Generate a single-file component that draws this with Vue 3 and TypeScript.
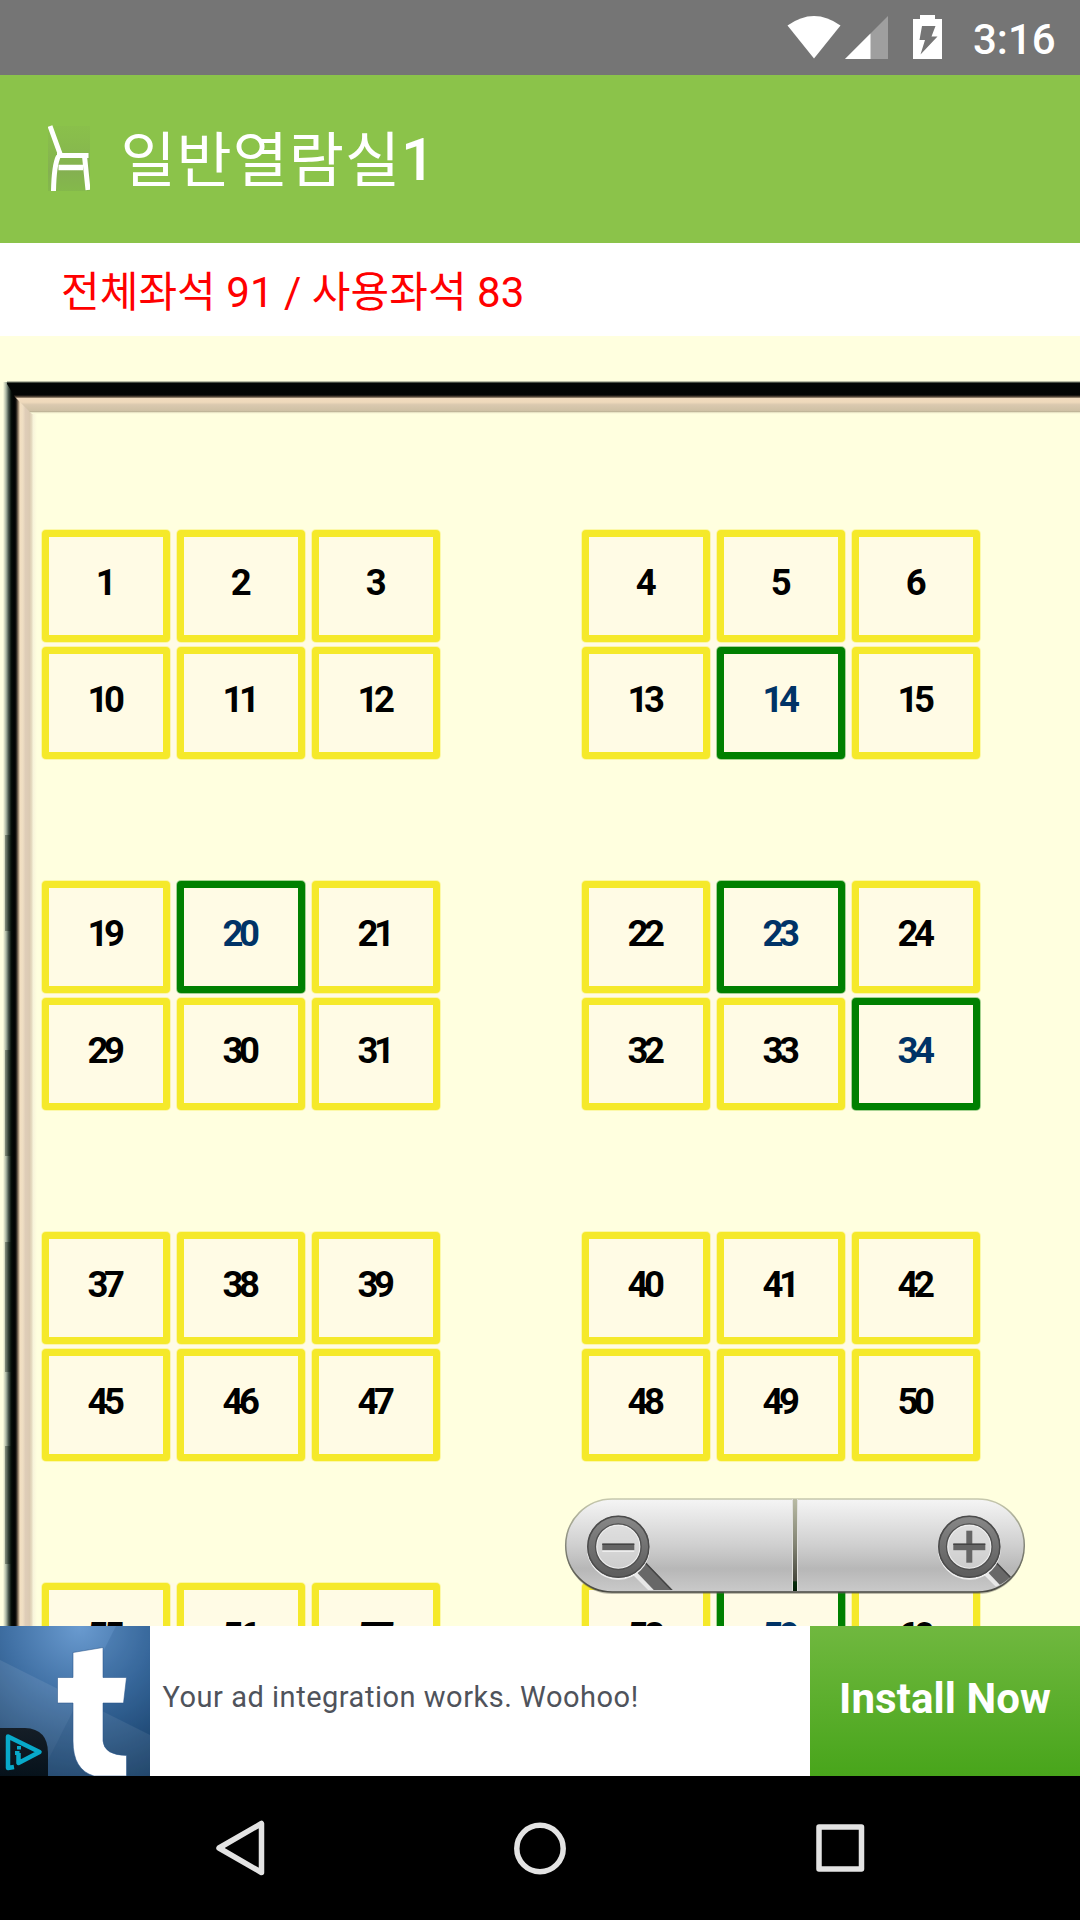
<script setup lang="ts">
interface Seat { id: number; free: boolean }
const free = new Set([14, 20, 23, 34, 59])
const numbers: number[][][] = [
  [[1, 2, 3, 4, 5, 6], [10, 11, 12, 13, 14, 15]],
  [[19, 20, 21, 22, 23, 24], [29, 30, 31, 32, 33, 34]],
  [[37, 38, 39, 40, 41, 42], [45, 46, 47, 48, 49, 50]],
  [[55, 56, 57, 58, 59, 60]],
]
const toSeat = (id: number): Seat => ({ id, free: free.has(id) })
// Each block holds a left and a right group, and each group up to two rows of three.
const blocks = numbers.map((rows) => [0, 3].map((start) => rows.map((r) => r.slice(start, start + 3).map(toSeat))))
const wallShades = [
  { y: 835, h: 96 }, { y: 1050, h: 106 }, { y: 1242, h: 130 }, { y: 1446, h: 118 },
]
</script>

<template>
  <div class="screen">
    <div class="status">
      <svg class="wifi" viewBox="0 0 54 44"><path d="M.5 10.500Q27-8.500 53.500 10.500L27 43.500Z" fill="#fff" /></svg>
      <svg class="signal" viewBox="0 0 43 43"><path d="M0 43L43 0V43Z" fill="#9f9f9f" /><path d="M0 43L25.500 17.500V43Z" fill="#fff" /></svg>
      <svg class="battery" viewBox="0 0 29 44"><path d="M7 0H22V4H29V44H0V4H7Z" fill="#fff" /><path d="M9 11H22.500L18.500 21.500H24.500L7.500 39.500L12 25H6.500Z" fill="#757575" /></svg>
      <span class="time">3:16</span>
    </div>

    <header class="title-bar">
      <svg class="chair" viewBox="0 0 42 66">
        <defs><linearGradient id="chairBg" x2="0" y2="1"><stop offset="0" stop-color="#87b84d" stop-opacity=".3" /><stop offset=".7" stop-color="#84b051" /><stop offset="1" stop-color="#84b94b" /></linearGradient></defs>
        <path d="M0 1H42V66H0Z" fill="url(#chairBg)" />
        <g fill="none" stroke="#fff" stroke-width="5" stroke-linejoin="round">
          <path d="M2 1L12.500 30M9 30.500H40.500M10.500 31Q6 40 5.500 66M36.500 31L40 65" />
          <path d="M10.500 42.500H35" stroke-width="5.500" />
        </g>
      </svg>
      <h1><span class="ko">일반열람실</span><span class="digit">1</span></h1>
    </header>

    <div class="summary">전체좌석 91 / 사용좌석 83</div>

    <main class="map">
      <svg class="wall" viewBox="0 336 1080 1290">
        <defs>
          <linearGradient id="side" gradientUnits="userSpaceOnUse" x1="3" y1="0" x2="37" y2="0">
            <stop offset="0" stop-color="#ffffdf" /><stop offset=".09" stop-color="#a9b5a2" /><stop offset=".16" stop-color="#4d5b50" /><stop offset=".24" stop-color="#07100b" /><stop offset=".3" stop-color="#020504" /><stop offset=".36" stop-color="#030504" /><stop offset=".4" stop-color="#342d25" /><stop offset=".46" stop-color="#a89479" /><stop offset=".5" stop-color="#f2dfc1" /><stop offset=".58" stop-color="#efdec3" /><stop offset=".66" stop-color="#dfcdb8" /><stop offset=".78" stop-color="#dbcab2" /><stop offset=".84" stop-color="#e5dbc0" /><stop offset=".89" stop-color="#f8f4da" /><stop offset="1" stop-color="#ffffdf" />
          </linearGradient>
          <linearGradient id="top" gradientUnits="userSpaceOnUse" x1="0" y1="381" x2="0" y2="414">
            <stop offset="0" stop-color="#ffffdf" /><stop offset=".03" stop-color="#737b6b" /><stop offset=".07" stop-color="#030705" /><stop offset=".42" stop-color="#030504" /><stop offset=".46" stop-color="#342b22" /><stop offset=".5" stop-color="#8c7b66" /><stop offset=".53" stop-color="#f0dabd" /><stop offset=".64" stop-color="#efdabc" /><stop offset=".72" stop-color="#dac9af" /><stop offset=".9" stop-color="#cfc1a5" /><stop offset=".93" stop-color="#bdb396" /><stop offset=".96" stop-color="#f2efd0" /><stop offset="1" stop-color="#ffffdf" />
          </linearGradient>
        </defs>
        <rect x="3" y="382" width="34" height="1244" fill="url(#side)" />
        <path d="M7 381H1080V414H32L15 397L7 384Z" fill="url(#top)" />
        <rect v-for="s in wallShades" :key="s.y" x="5" :y="s.y" width="6" :height="s.h" fill="#06100a" opacity=".35" />
      </svg>

      <div class="seats">
        <section v-for="(groups, b) in blocks" :key="b" class="block">
          <div v-for="(rows, g) in groups" :key="g" class="group">
            <div v-for="(row, r) in rows" :key="r" class="row">
              <div v-for="seat in row" :key="seat.id" class="seat" :class="{ free: seat.free }">{{ seat.id }}</div>
            </div>
          </div>
        </section>
      </div>

      <svg class="zoom" viewBox="0 0 464 100">
        <defs>
          <linearGradient id="pill" x2="0" y2="1"><stop offset="0" stop-color="#f5f5f5" /><stop offset=".2" stop-color="#e6e6e6" /><stop offset=".5" stop-color="#cfcfcf" /><stop offset=".75" stop-color="#b7b7b7" /><stop offset="1" stop-color="#cacaca" /></linearGradient>
          <linearGradient id="rim" x2="0" y2="1"><stop offset="0" stop-color="#c6c8ad" /><stop offset=".5" stop-color="#85877a" /><stop offset="1" stop-color="#494943" /></linearGradient>
          <linearGradient id="split" x2="0" y2="1"><stop offset="0" stop-color="#b9bba4" /><stop offset=".5" stop-color="#828373" /><stop offset=".89" stop-color="#45463c" /><stop offset=".9" stop-color="#062f0b" /><stop offset="1" stop-color="#021b05" /></linearGradient>
          <linearGradient id="lens" x2="0" y2="1"><stop offset="0" stop-color="#858585" /><stop offset="1" stop-color="#5e5e5e" /></linearGradient>
          <clipPath id="inside"><rect x="3" y="2" width="458" height="90" rx="45" /></clipPath>
        </defs>
        <rect x="3" y="3" width="458" height="93" rx="46" fill="#5b5b50" opacity=".4" />
        <rect x="2.700" y="1" width="458.600" height="93" rx="46.500" fill="url(#pill)" stroke="url(#rim)" stroke-width="1.500" />
        <rect x="229" y="1" width="6" height="92" fill="#e0e0dd" />
        <rect x="230" y="1" width="4" height="92" fill="url(#split)" />
        <g clip-path="url(#inside)">
          <g v-for="(cx, i) in [55.3, 406.3]" :key="cx" :transform="`translate(${cx} 48.700)`">
            <path d="M17 28L28 16L56 46L36 47Z" fill="#e7e7e7" transform="translate(-1.500 1)" />
            <path d="M19 26L28 16L56 46L38 46Z" fill="#686868" />
            <path d="M27 16L56 46" stroke="#444" stroke-width="1.500" />
            <circle cy="1.500" r="27.500" fill="none" stroke="#eee" stroke-width="8" />
            <circle r="22" fill="#dedede" fill-opacity=".55" stroke="#eee" stroke-width="2" />
            <circle r="26.800" fill="none" stroke="url(#lens)" stroke-width="8.500" />
            <circle r="30.500" fill="none" stroke="#4b4b4b" stroke-width="1.500" />
            <circle r="22.800" fill="none" stroke="#505050" stroke-width="1.300" />
            <rect x="-16" y="-3" width="32" height="6.500" fill="#656565" />
            <rect v-if="i === 1" x="-3" y="-16" width="6" height="32" fill="#656565" />
            <path d="M-16 -2.500H16" stroke="#444" stroke-width="1.500" />
            <path v-if="i === 0" d="M-16 4.500H16" stroke="#eee" stroke-width="1.500" />
          </g>
        </g>
      </svg>
    </main>

    <aside class="ad">
      <svg class="ad-logo" viewBox="0 0 150 150">
        <defs>
          <radialGradient id="sky" cx=".53" cy="0" r="1.100"><stop offset="0" stop-color="#6a9bd0" /><stop offset=".45" stop-color="#3f6fa3" /><stop offset="1" stop-color="#143a60" /></radialGradient>
          <linearGradient id="badge" x2="0" y2="1"><stop offset="0" stop-color="#151e27" /><stop offset="1" stop-color="#06121b" /></linearGradient>
        </defs>
        <rect width="150" height="150" fill="url(#sky)" />
        <path d="M0 34L150 109V150H0Z" fill="#fff" opacity=".09" />
        <path d="M116 0L40 150H150V0Z" fill="#003066" opacity=".12" />
        <path d="M73 26.500L103 21.500V51.500H126.500L123.500 77H103V115Q104 129 126.500 129.500V150H94Q73 144 73 115V77H57.500V51.500H73Z" fill="#fff" stroke="#2a568a" stroke-opacity=".55" stroke-width="1" />
        <path d="M0 102H25Q48 103 48 127V150H0Z" fill="url(#badge)" />
        <g stroke="#08aaca" stroke-linejoin="round" fill="none">
          <path d="M14 141L8 142V110.500L39.500 126L18.500 137V127" stroke-width="4.500" />
          <path d="M15 127H19.500M19 120V123.500" stroke-width="4" />
        </g>
      </svg>
      <span class="ad-text">Your ad integration works. Woohoo!</span>
      <span class="install">Install Now</span>
    </aside>

    <nav class="nav">
      <svg viewBox="0 0 1080 144" fill="none" stroke="#e3e3e3" stroke-linejoin="round">
        <path d="M261.500 47.500V96.500L219 72Z" stroke-width="5.500" />
        <circle cx="540" cy="72.500" r="23.200" stroke-width="5.500" />
        <rect x="819" y="51" width="42.500" height="42" stroke-width="5.500" />
      </svg>
    </nav>
  </div>
</template>

<style>
body { margin: 0; }
</style>
<style scoped>
.screen { width: 1080px; height: 1920px; display: flex; flex-direction: column; overflow: hidden; font-family: Roboto, "Noto Sans CJK KR", sans-serif; background: #ffffdf; }
.status { height: 75px; flex: none; background: #757575; display: flex; align-items: flex-start; color: #fff; }
.status svg { flex: none; }
.wifi { width: 54px; height: 44px; margin: 15px 0 0 786.500px; }
.signal { width: 43px; height: 43px; margin: 16px 0 0 4.500px; }
.battery { width: 29px; height: 44px; margin: 15px 0 0 25px; }
.time { font-size: 42px; font-weight: 500; line-height: 50px; margin: 15px 0 0 31px; white-space: nowrap; }
.title-bar { height: 168px; flex: none; background: #8bc34a; display: flex; color: #fff; }
.chair { width: 42px; height: 66px; margin: 50px 0 0 48px; flex: none; }
h1 { margin: 42px 0 0 30.500px; font-size: 60px; line-height: 86px; font-weight: 500; display: flex; white-space: nowrap; }
.ko { font-weight: 400; letter-spacing: .9px; padding-top: 2px; }
.summary { height: 93px; flex: none; box-sizing: border-box; background: #fff; padding: 19px 0 0 61px; color: #f00; font-size: 42px; line-height: 62px; letter-spacing: .05px; white-space: nowrap; }
.map { height: 1290px; flex: none; position: relative; overflow: hidden; background: #ffffdf; }
.wall { position: absolute; left: 0; top: 0; width: 1080px; height: 1290px; }
.seats { position: relative; padding: 194px 0 0 42px; display: flex; flex-direction: column; gap: 122px; }
.block { display: flex; align-items: flex-start; gap: 142px; }
.group { display: flex; flex-direction: column; gap: 5px; background: #fffbe5; border-radius: 4px; }
.row { display: flex; gap: 7px; }
.seat { width: 128px; height: 112px; box-sizing: border-box; border: 7px solid #f5e92a; border-radius: 4px; box-shadow: 0 0 0 1px rgba(245, 233, 42, .3); background: #fffbe5; color: #000; font-size: 36.500px; font-weight: 700; line-height: 42px; letter-spacing: -4.500px; text-align: center; padding: 25px 4px 0 0; }
.seat.free { border-color: #008000; box-shadow: 0 0 0 1px rgba(0, 128, 0, .35); color: #003366; }
.zoom { position: absolute; left: 563px; top: 1162px; width: 464px; height: 100px; }
.ad { height: 150px; flex: none; background: #fff; display: flex; align-items: center; }
.ad-logo { width: 150px; height: 150px; flex: none; }
.ad-text { margin-left: 12.500px; flex: 1; font-size: 29px; line-height: 40px; color: #4f535b; letter-spacing: .52px; padding-bottom: 8px; white-space: nowrap; }
.install { width: 270px; height: 150px; line-height: 145px; text-align: center; color: #fff; font-size: 42px; font-weight: 700; letter-spacing: .08px; background: linear-gradient(#70b83f, #48a51b); }
.nav { height: 144px; flex: none; background: #000; }
.nav svg { display: block; width: 1080px; height: 144px; }
</style>
